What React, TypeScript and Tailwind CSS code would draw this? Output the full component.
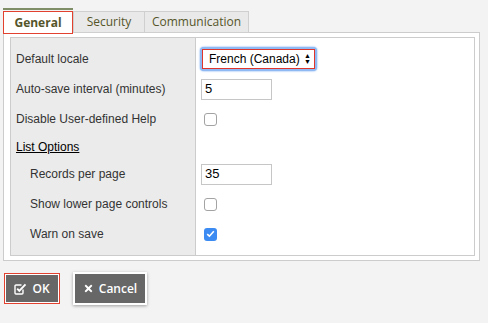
import { FaTimes } from "react-icons/fa";

const CheckSquareIcon = () => (
  <svg width="13" height="12" viewBox="0 0 13 12" className="shrink-0">
    <path d="M9 6.5 V10 a1 1 0 0 1 -1 1 H2 a1 1 0 0 1 -1 -1 V3 a1 1 0 0 1 1 -1 H7.5" fill="none" stroke="white" strokeWidth="1.4" />
    <path d="M3.2 5.6 L5.3 7.8 L11.5 1.4" fill="none" stroke="white" strokeWidth="1.9" />
  </svg>
);

const Checkbox = ({ checked }: { checked?: boolean }) =>
  checked ? (
    <div className="w-[13px] h-[13px] rounded-[3px] bg-[#3b8bf2] flex items-center justify-center ml-[3px]">
      <svg width="9" height="8" viewBox="0 0 9 8">
        <path d="M1.2 4.2 L3.4 6.2 L7.8 1.3" fill="none" stroke="white" strokeWidth="1.6" />
      </svg>
    </div>
  ) : (
    <div className="w-[13px] h-[13px] rounded-[3px] border border-[#a3a3a3] bg-white ml-[3px]" />
  );

const TextBox = ({ value }: { value: string }) => (
  <div className="w-[71px] h-[21px] border border-[#c6c6c6] bg-white pl-[3px] flex items-center text-[13px] text-black">
    {value}
  </div>
);

type Row = { label: string; h: string; indent?: boolean; heading?: boolean; control?: React.ReactNode };

const rows: Row[] = [
  {
    label: "Default locale",
    h: "h-[31px]",
    control: (
      <div className="-ml-[1px] rounded-[4px] p-[2px] bg-[#8fb9f3] shadow-[0_0_2px_#5d9cf0]">
        <div className="w-[113px] h-[20px] border border-[#e0352b] bg-white flex items-center pl-[6px] pr-[3px] text-[12px] text-black">
          <span className="flex-1">French (Canada)</span>
          <span className="flex flex-col leading-none text-[7px] -space-y-[1px]">
            <span>▲</span>
            <span>▼</span>
          </span>
        </div>
      </div>
    ),
  },
  { label: "Auto-save interval (minutes)", h: "h-[30px]", control: <TextBox value="5" /> },
  { label: "Disable User-defined Help", h: "h-[30px]", control: <Checkbox /> },
  { label: "List Options", h: "h-[25px]", heading: true },
  { label: "Records per page", h: "h-[30px]", indent: true, control: <TextBox value="35" /> },
  { label: "Show lower page controls", h: "h-[30px]", indent: true, control: <Checkbox /> },
  { label: "Warn on save", h: "h-[30px]", indent: true, control: <Checkbox checked /> },
];

export default function App() {
  return (
    <div className="w-[488px] h-[323px] bg-[#f3f3f3] pl-[3px] pt-[8px] font-['Liberation_Sans',Arial,sans-serif] overflow-hidden">
      {/* tabs */}
      <div className="flex items-start font-['Open_Sans',sans-serif] text-[12px] text-[#55552a]">
        <div className="flex flex-col w-[70px]">
          <div className="h-[2px] bg-[#7f8e66]" />
          <div className="h-[1px]" />
          <div className="h-[23px] border border-[#e2412f] bg-white flex items-center justify-center font-bold relative z-10 -mb-[1px]">
            General
          </div>
        </div>
        <div className="mt-[3px] h-[22px] w-[72px] border border-[#cfcfcf] bg-[#e9e9e9] flex items-center justify-center">
          Security
        </div>
        <div className="mt-[3px] h-[22px] w-[104px] border border-l-0 border-[#cfcfcf] bg-[#e9e9e9] flex items-center justify-center">
          Communication
        </div>
      </div>

      {/* panel */}
      <div className="w-[477px] h-[229px] -mt-[1px] border border-[#cccccc] bg-white pt-[4px] pl-[6px]">
        <div className="w-[465px] h-[219px] border border-[#cccccc] flex">
          <div className="w-[185px] bg-[#ebebeb] border-r border-[#cccccc] pt-[5px] text-[12px] text-[#333333]">
            {rows.map((r) => (
              <div key={r.label} className={`${r.h} flex items-center ${r.indent ? "pl-[19px]" : "pl-[5px]"}`}>
                {r.heading ? <span className="underline text-black">{r.label}</span> : r.label}
              </div>
            ))}
          </div>
          <div className="flex-1 pt-[5px] pl-[5px]">
            {rows.map((r) => (
              <div key={r.label} className={`${r.h} flex items-center`}>
                {r.control}
              </div>
            ))}
          </div>
        </div>
      </div>

      {/* buttons */}
      <div className="flex items-center gap-[13px] mt-[11px] pl-[1px] font-['Open_Sans',sans-serif] text-[12px] font-semibold text-white">
        <div className="w-[56px] h-[31px] border border-[#e2412f] p-[1px] bg-white">
          <div className="w-full h-full bg-[#676767] flex items-center justify-center gap-[5px]">
            <CheckSquareIcon />
            <span>OK</span>
          </div>
        </div>
        <div className="w-[74px] h-[33px] border-2 border-white shadow-[0_1px_3px_rgba(0,0,0,0.35)] bg-[#676767] flex items-center justify-center gap-[5px]">
          <FaTimes className="w-[11px] h-[11px]" />
          <span>Cancel</span>
        </div>
      </div>
    </div>
  );
}
